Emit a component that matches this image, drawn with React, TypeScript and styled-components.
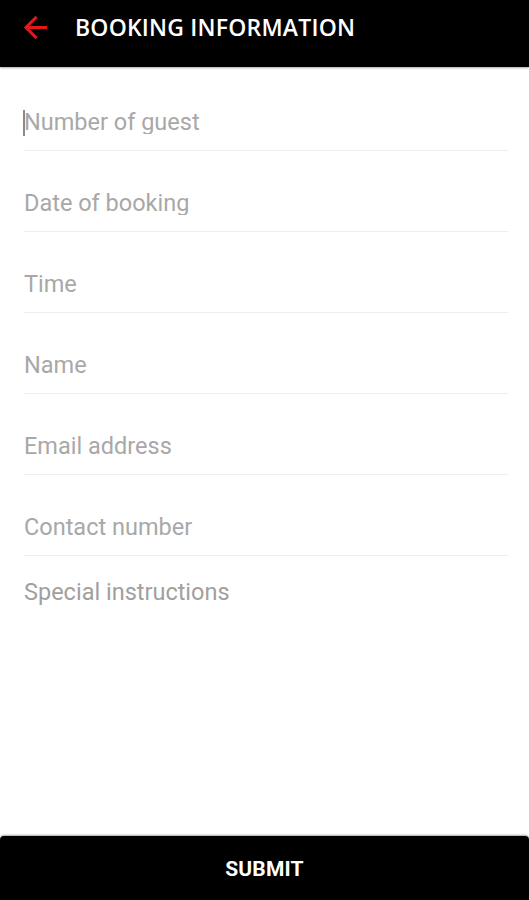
import styled, { createGlobalStyle } from "styled-components";

const GlobalStyle = createGlobalStyle`
  html, body {
    margin: 0;
    padding: 0;
    background: #ffffff;
  }
  * {
    box-sizing: border-box;
  }
`;

const Page = styled.div`
  display: flex;
  flex-direction: column;
  height: 100vh;
  background: #ffffff;
`;

const Header = styled.header`
  height: 67px;
  background: #000000;
  display: flex;
  align-items: flex-start;
  padding: 10px 0 0 18px;
  box-shadow: 0 1px 2px rgba(0, 0, 0, 0.35);
  position: relative;
  z-index: 1;
  flex-shrink: 0;
`;

const BackButton = styled.button`
  width: 35px;
  height: 35px;
  padding: 0;
  border: none;
  background: transparent;
  display: flex;
  cursor: pointer;
  & > svg {
    width: 35px;
    height: 35px;
  }
`;

const Title = styled.h1`
  margin: 5px 0 0 22px;
  font-family: "Open Sans", "Liberation Sans", sans-serif;
  font-weight: 600;
  font-size: 23px;
  line-height: 24px;
  letter-spacing: 0.2px;
  color: #ffffff;
`;

const Form = styled.form`
  flex: 1;
  display: flex;
  flex-direction: column;
  padding: 3px 21px 0 24px;
`;

const Field = styled.div`
  position: relative;
  padding: 40px 0 16px;
  border-bottom: 1px solid #eeeeee;
`;

const Input = styled.input`
  width: 100%;
  border: none;
  outline: none;
  padding: 0;
  height: 24px;
  font-family: Roboto, "Liberation Sans", sans-serif;
  font-size: 23.5px;
  color: #333333;
  background: transparent;
  &::placeholder {
    color: #a8a8a8;
  }
`;

const Caret = styled.span`
  position: absolute;
  left: -1px;
  top: 40px;
  width: 2px;
  height: 26px;
  background: #8a8a8a;
`;

const TextArea = styled.textarea`
  flex: 1;
  border: none;
  outline: none;
  resize: none;
  padding: 24px 0 0;
  font-family: Roboto, "Liberation Sans", sans-serif;
  font-size: 23.5px;
  line-height: 24px;
  color: #333333;
  background: transparent;
  &::placeholder {
    color: #a0a0a0;
  }
`;

const SubmitButton = styled.button`
  flex-shrink: 0;
  height: 64px;
  border: none;
  border-radius: 4px 4px 0 0;
  background: #000000;
  color: #ffffff;
  font-family: Roboto, "Liberation Sans", sans-serif;
  font-weight: 700;
  font-size: 21px;
  letter-spacing: 0.2px;
  padding: 2px 0 0;
  box-shadow: 0 -1px 2px rgba(0, 0, 0, 0.35);
  cursor: pointer;
`;

const fields = [
  "Number of guest",
  "Date of booking",
  "Time",
  "Name",
  "Email address",
  "Contact number",
];

const App = () => {
  return (
    <>
      <GlobalStyle />
      <Page>
        <Header>
          <BackButton type="button" aria-label="Back">
            <svg viewBox="0 0 24 24">
              <path
                fill="#e8161b"
                d="M20 11H7.83l5.59-5.59L12 4l-8 8 8 8 1.41-1.41L7.83 13H20v-2z"
              />
            </svg>
          </BackButton>
          <Title>BOOKING INFORMATION</Title>
        </Header>
        <Form>
          {fields.map((label, i) => (
            <Field key={label}>
              {i === 0 && <Caret />}
              <Input type="text" placeholder={label} />
            </Field>
          ))}
          <TextArea placeholder="Special instructions" />
        </Form>
        <SubmitButton type="button">SUBMIT</SubmitButton>
      </Page>
    </>
  );
};

export default App;
